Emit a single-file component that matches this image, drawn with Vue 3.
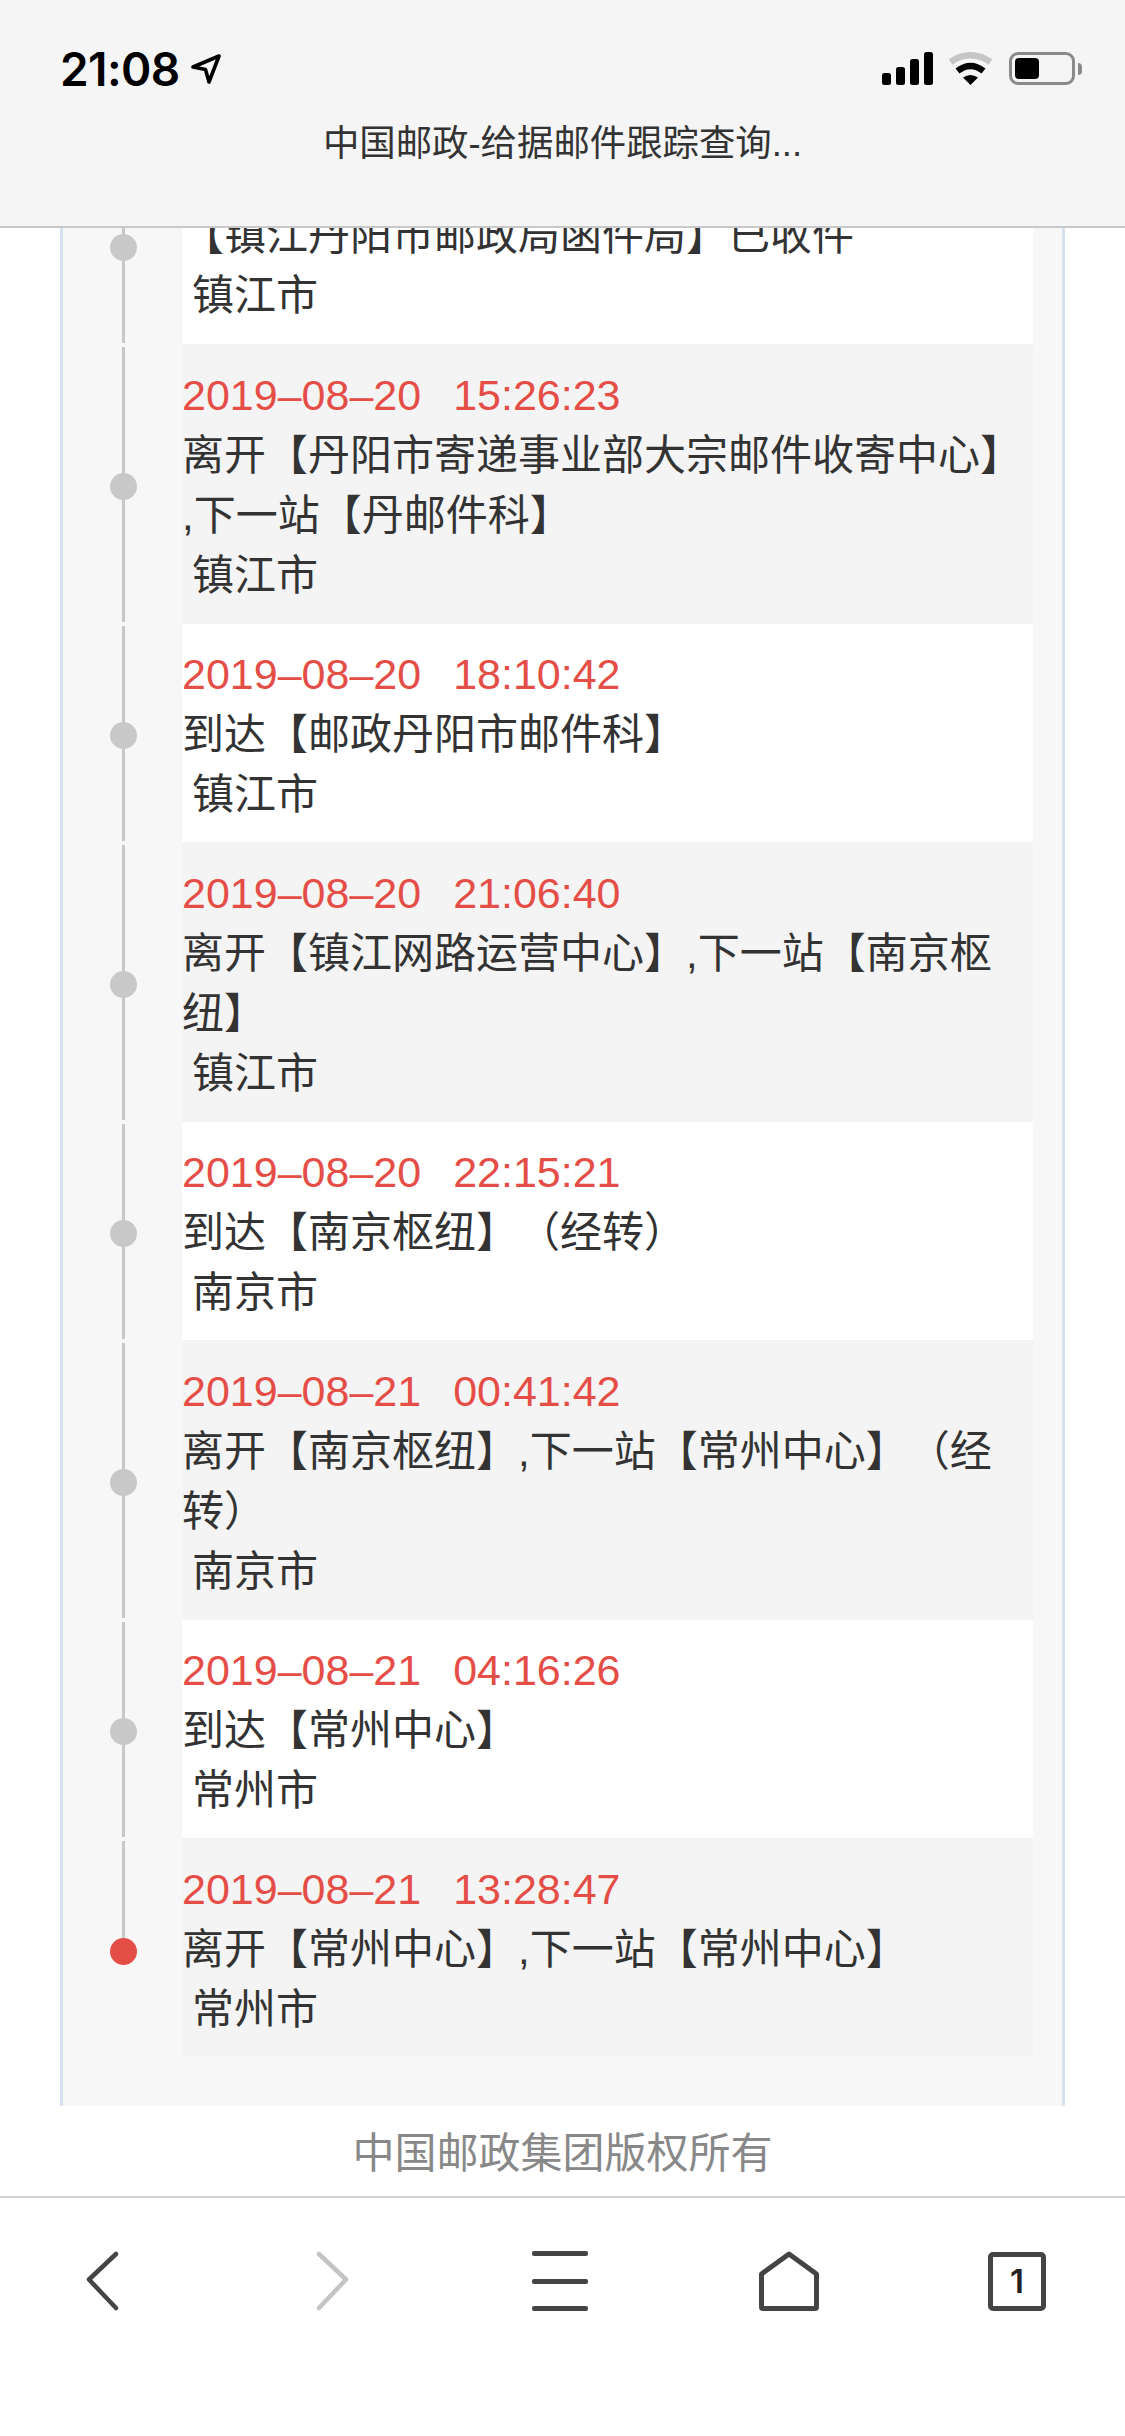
<script setup>
// tracking rows, oldest first; the first one is scrolled under the header
const events = [
  { date: '', lines: ['【镇江丹阳市邮政局函件局】已收件'], city: '镇江市' },
  { date: '2019–08–20', time: '15:26:23', lines: ['离开【丹阳市寄递事业部大宗邮件收寄中心】', ',下一站【丹邮件科】'], city: '镇江市' },
  { date: '2019–08–20', time: '18:10:42', lines: ['到达【邮政丹阳市邮件科】'], city: '镇江市' },
  { date: '2019–08–20', time: '21:06:40', lines: ['离开【镇江网路运营中心】,下一站【南京枢', '纽】'], city: '镇江市' },
  { date: '2019–08–20', time: '22:15:21', lines: ['到达【南京枢纽】（经转）'], city: '南京市' },
  { date: '2019–08–21', time: '00:41:42', lines: ['离开【南京枢纽】,下一站【常州中心】（经', '转）'], city: '南京市' },
  { date: '2019–08–21', time: '04:16:26', lines: ['到达【常州中心】'], city: '常州市' },
  { date: '2019–08–21', time: '13:28:47', lines: ['离开【常州中心】,下一站【常州中心】'], city: '常州市' }
]
</script>

<template>
  <div class="phone">
    <header class="top">
      <div class="status">
        <div class="clock">
          <span class="time">21:08</span>
          <svg class="arrow" width="30" height="30" viewBox="0 0 30 30">
            <path d="M2 13 L28 2 L18 28 L14.5 15.5 Z" fill="none" stroke="#000" stroke-width="3.6" stroke-linejoin="round" />
          </svg>
        </div>
        <div class="indicators">
          <svg width="51" height="33" viewBox="0 0 51 33">
            <rect x="0" y="21" width="9" height="12" rx="2.5" />
            <rect x="14" y="15" width="9" height="18" rx="2.5" />
            <rect x="28" y="7" width="9" height="26" rx="2.5" />
            <rect x="42" y="0" width="9" height="33" rx="2.5" />
          </svg>
          <svg class="wifi" width="45" height="33" viewBox="0 0 45 33">
            <path d="M2.5 10 Q22.5 -3.5 42.5 10" fill="none" stroke="#c6c6c6" stroke-width="6.5" />
            <path d="M9.5 19 Q22.5 9 35.5 19" fill="none" stroke="#000" stroke-width="6.5" />
            <path d="M22.5 33 L15 25.5 Q22.5 20.5 30 25.5 Z" />
          </svg>
          <div class="battery"><div class="level"></div></div>
          <div class="nub"></div>
        </div>
      </div>
      <div class="title">中国邮政-给据邮件跟踪查询...</div>
    </header>

    <main class="content">
      <section class="panel">
        <div
          v-for="(ev, i) in events"
          :key="i"
          class="row"
          :class="{ clipped: i === 0, shaded: i % 2 === 1, latest: i === events.length - 1 }"
        >
          <div class="rail">
            <span class="line"></span>
            <span class="dot"></span>
          </div>
          <div class="card">
            <div v-if="ev.date" class="stamp">{{ ev.date }}<span class="clock-time">{{ ev.time }}</span></div>
            <div v-for="(t, j) in ev.lines" :key="j" class="msg">{{ t }}</div>
            <div class="city">{{ ev.city }}</div>
          </div>
        </div>
      </section>
      <div class="copyright">中国邮政集团版权所有</div>
    </main>

    <nav class="toolbar">
      <div class="tool">
        <svg width="34" height="60" viewBox="0 0 34 60"><path d="M30 3 L3 28.5 L30 57" fill="none" stroke="#444" stroke-width="4.5" stroke-linecap="round" stroke-linejoin="round" /></svg>
      </div>
      <div class="tool">
        <svg width="34" height="60" viewBox="0 0 34 60"><path d="M4 3 L31 28.5 L4 57" fill="none" stroke="#c4c4c4" stroke-width="4.5" stroke-linecap="round" stroke-linejoin="round" /></svg>
      </div>
      <div class="tool">
        <div class="menu"><span></span><span></span><span></span></div>
      </div>
      <div class="tool">
        <svg width="60" height="60" viewBox="0 0 60 60"><path d="M30 3 L57.5 23 V56 Q57.5 57.5 56 57.5 H4 Q2.5 57.5 2.5 56 V23 Z" fill="none" stroke="#444" stroke-width="5" stroke-linejoin="round" /></svg>
      </div>
      <div class="tool">
        <div class="tabs">1</div>
      </div>
    </nav>
  </div>
</template>

<style scoped>
.phone {
  width: 1125px;
  height: 2436px;
  display: flex;
  flex-direction: column;
  background: #fff;
  overflow: hidden;
  font-family: "Liberation Sans", "Noto Sans CJK SC", sans-serif;
  color: #333;
  text-spacing-trim: space-all;
}

.top {
  height: 228px;
  box-sizing: border-box;
  flex: none;
  background: #f5f5f5;
  border-bottom: 2px solid #c9c9c9;
}
.status {
  display: flex;
  justify-content: space-between;
  align-items: center;
  height: 33px;
  padding: 52px 43px 0 60px;
}
.clock {
  display: flex;
  align-items: center;
  gap: 11px;
}
.time {
  font-family: Inter, sans-serif;
  font-size: 46px;
  font-weight: 600;
  color: #000;
  letter-spacing: -0.6px;
}
.indicators {
  display: flex;
  align-items: center;
}
.wifi {
  margin: 0 16px 0 15px;
}
.battery {
  width: 66px;
  height: 33px;
  box-sizing: border-box;
  border: 3px solid #8a8a8a;
  border-radius: 9px;
  padding: 3px;
}
.level {
  width: 24px;
  height: 21px;
  background: #000;
  border-radius: 4px;
}
.nub {
  width: 4px;
  height: 12px;
  margin-left: 3px;
  background: #8a8a8a;
  border-radius: 0 4px 4px 0;
}
.title {
  margin-top: 39px;
  text-align: center;
  font-size: 36.4px;
  line-height: 40px;
}

.content {
  flex: 1;
  min-height: 0;
  display: flex;
  flex-direction: column;
}
.panel {
  margin: 0 60px;
  padding: 0 29px 50px 0;
  background: #f7f7f7;
  border-left: 3px solid #d6e3ee;
  border-right: 3px solid #d6e3ee;
}

.row {
  display: grid;
  grid-template-columns: 119px 1fr;
}
.row.clipped {
  grid-template-rows: 117px;
  overflow: hidden;
}
.rail {
  position: relative;
}
.line {
  position: absolute;
  left: 59px;
  top: 2px;
  bottom: 2px;
  width: 3px;
  background: #c8c8c8;
}
.dot {
  position: absolute;
  left: 47px;
  top: 50%;
  width: 27px;
  height: 27px;
  margin-top: -12px;
  border-radius: 50%;
  background: #c8c8c8;
}
.clipped .line {
  top: 0;
}
.clipped .dot {
  top: 18px;
}
.latest .line {
  bottom: 50%;
}
.latest .dot {
  margin-top: -10px;
  background: #e54d47;
}

.card {
  padding: 21px 0 17px;
  background: #fff;
  border-bottom: 1px solid #f1f1f1;
  font-size: 42px;
  line-height: 60px;
  white-space: pre;
}
.shaded .card {
  background: #f4f4f4;
  border-bottom-color: #f4f4f4;
}
.clipped .card {
  display: flex;
  flex-direction: column;
  justify-content: flex-end;
  min-height: 0;
  overflow: hidden;
  padding: 0 0 18px;
}
.latest .card {
  padding-bottom: 15px;
}
.stamp {
  font-size: 43px;
  line-height: 58px;
  margin-bottom: 2px;
  color: #e54d47;
}
.clock-time {
  margin-left: 32px;
}
.city {
  padding-left: 10px;
}

.copyright {
  flex: 1;
  display: flex;
  align-items: center;
  justify-content: center;
  padding-bottom: 4px;
  font-size: 42px;
  color: #888;
}

.toolbar {
  height: 240px;
  box-sizing: border-box;
  flex: none;
  padding: 53px 78px 0 73px;
  display: flex;
  justify-content: space-between;
  align-items: flex-start;
  background: #fff;
  border-top: 2px solid #d2d2d2;
}
.tool {
  width: 60px;
  height: 60px;
  display: flex;
  align-items: center;
  justify-content: center;
}
.menu {
  width: 56px;
  height: 60px;
  display: flex;
  flex-direction: column;
  justify-content: space-between;
}
.menu span {
  height: 5px;
  border-radius: 2px;
  background: #444;
}
.tabs {
  width: 58px;
  height: 59px;
  box-sizing: border-box;
  border: 5px solid #444;
  border-radius: 5px;
  display: flex;
  align-items: center;
  justify-content: center;
  font-family: Inter, sans-serif;
  font-size: 33px;
  font-weight: 600;
  color: #222;
}
</style>

<style>
html, body {
  background: #fff;
}
</style>
